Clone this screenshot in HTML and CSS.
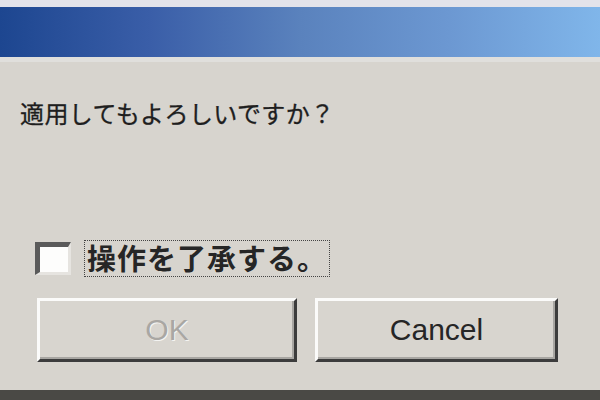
FILE: index.html
```html
<!DOCTYPE html>
<html lang="ja">
<head>
<meta charset="utf-8">
<link rel="stylesheet" href="styles.css">
</head>
<body>
<div class="window">
  <div class="top-strip"></div>
  <div class="titlebar"></div>
  <div class="title-edge"></div>
  <div class="content">
    <p class="message">適用してもよろしいですか？</p>
    <div class="check-row">
      <span class="checkbox"></span>
      <span class="check-label">操作を了承する。</span>
    </div>
    <div class="buttons">
      <button class="btn btn-ok" disabled>OK</button>
      <button class="btn btn-cancel">Cancel</button>
    </div>
  </div>
  <div class="bottom-band"></div>
</div>
</body>
</html>
```

FILE: styles.css
```css
html, body {
  margin: 0;
  padding: 0;
  width: 600px;
  height: 400px;
  overflow: hidden;
  background: #d6d3ce;
}
.window {
  display: flex;
  flex-direction: column;
  width: 600px;
  height: 400px;
  font-family: "Noto Sans CJK JP", "Liberation Sans", sans-serif;
}
.top-strip {
  height: 7px;
  background: #e3e3ea;
}
.titlebar {
  height: 50px;
  background: linear-gradient(90deg, #1d4690 0%, #3a5ea8 25%, #5a82bd 50%, #6c98d2 75%, #80b6ea 100%);
}
.title-edge {
  height: 5px;
  background: #e0dfdc;
}
.content {
  flex: 1;
  display: flex;
  flex-direction: column;
  background: #d7d4ce;
}
.message {
  margin: 33px 0 0 20px;
  height: 36px;
  line-height: 36px;
  font-size: 24px;
  color: #1e1e1e;
  letter-spacing: 0.4px;
  -webkit-text-stroke: 0.3px #1e1e1e;
}
.check-row {
  display: flex;
  align-items: center;
  gap: 13px;
  margin: 109px 0 0 35px;
  height: 37px;
}
.checkbox {
  box-sizing: border-box;
  width: 36px;
  height: 33px;
  background: #fdfdfc;
  border-top: 5px solid #5a5a5a;
  border-left: 5px solid #5a5a5a;
  border-right: 3px solid #e6e4e0;
  border-bottom: 3px solid #e6e4e0;
}
.check-label {
  box-sizing: border-box;
  height: 37px;
  line-height: 33px;
  padding: 0 2px;
  border: 1px dotted #444;
  font-size: 29px;
  font-weight: bold;
  letter-spacing: 1px;
  color: #262626;
}
.buttons {
  display: flex;
  gap: 18px;
  margin: 21px 0 0 37px;
}
.btn {
  box-sizing: border-box;
  height: 64px;
  background: #d8d5cf;
  border-top: 3px solid #fbfbfa;
  border-left: 3px solid #fbfbfa;
  border-right: 3px solid #3c3c3c;
  border-bottom: 3px solid #3c3c3c;
  box-shadow: inset -2px -2px 0 #a8a6a2;
  font-family: "Liberation Sans", "Noto Sans", sans-serif;
  font-size: 30px;
  padding: 0;
}
.btn-ok {
  width: 260px;
  color: #a9a7a3;
  text-shadow: 1px 1px 0 #f4f4f2;
}
.btn-cancel {
  width: 243px;
  color: #262626;
}
.bottom-band {
  height: 10px;
  background: #4a4945;
}
```
